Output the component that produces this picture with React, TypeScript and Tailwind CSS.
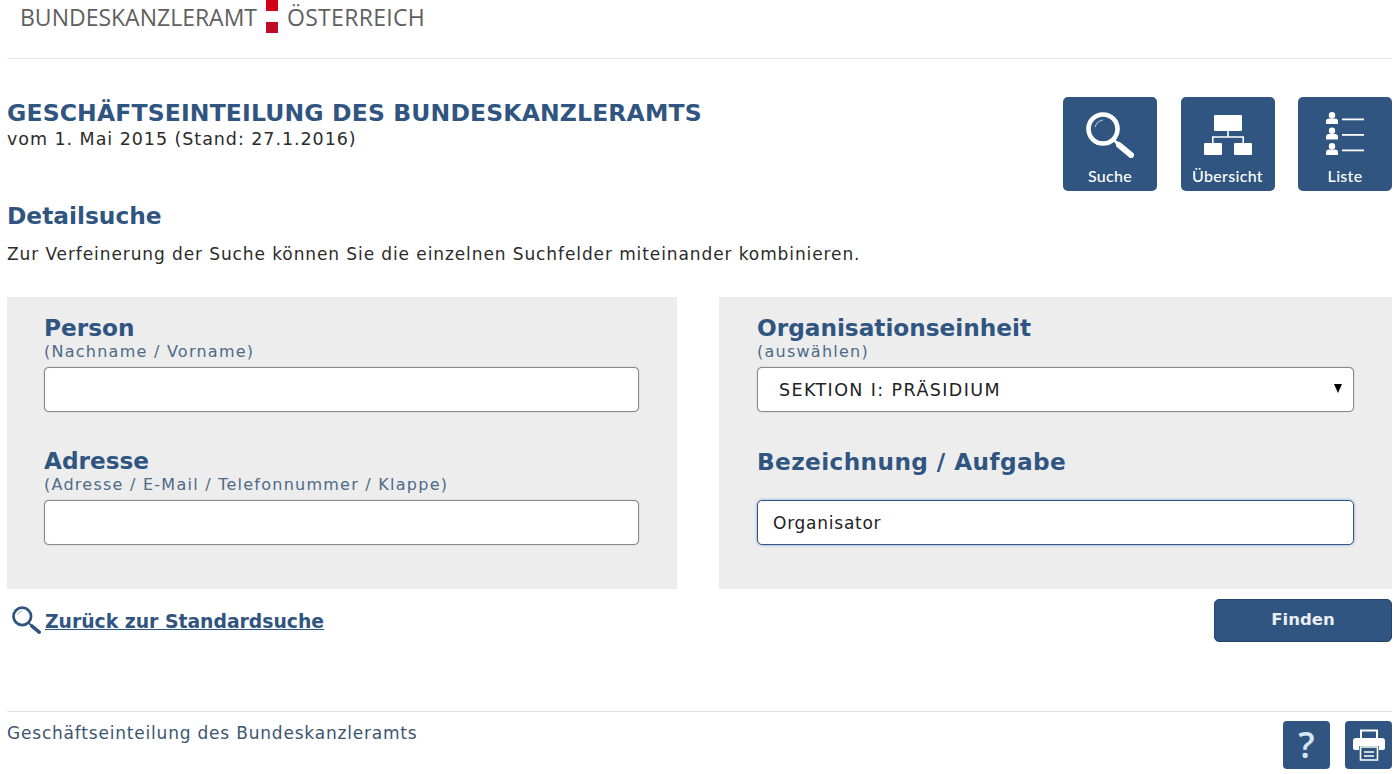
const blue = "text-[#2f5580]";

function SearchIcon({ className }: { className: string }) {
  return (
    <svg viewBox="0 0 48 46" className={className} fill="none" stroke="currentColor">
      <circle cx="17" cy="17" r="14.5" strokeWidth="4.6" />
      <path d="M28 28 L33 33" strokeWidth="3" />
      <path d="M33 33 L45 43" strokeWidth="6" strokeLinecap="round" />
      <path d="M9 15 Q11 9 17 8" strokeWidth="1.2" strokeOpacity="0.6" />
    </svg>
  );
}

function TreeIcon() {
  return (
    <svg viewBox="0 0 48 40" className="h-[40px] w-[48px]" fill="#fff">
      <rect x="10" y="0" width="28" height="16" rx="1" />
      <rect x="0" y="28" width="18" height="12" rx="1" />
      <rect x="30" y="28" width="18" height="12" rx="1" />
      <path d="M23.2 16h1.6v5.2H40v6.8h-1.6v-5.2H9.6V28H8v-6.8h15.2z" />
    </svg>
  );
}

function ListIcon() {
  return (
    <svg viewBox="0 0 38 43" className="h-[43px] w-[38px]" fill="#fff">
      {[0, 15.5, 31].map((y) => (
        <g key={y} transform={`translate(0 ${y})`}>
          <circle cx="6" cy="3.2" r="3.2" />
          <path d="M0 12V9.5Q0 6.5 3 6.5h6q3 0 3 3V12z" />
          <rect x="16" y="6.5" width="22" height="1.8" />
        </g>
      ))}
    </svg>
  );
}

function PrinterIcon() {
  return (
    <svg viewBox="0 0 32 32" className="h-[32px] w-[32px]">
      <path d="M8 1.5h16v10H8z" fill="none" stroke="#fff" strokeWidth="2" />
      <path d="M3 9h26q3 0 3 3v7q0 2-2 2h-4v-4H6v4H2q-2 0-2-2v-7q0-3 3-3z" fill="#fff" />
      <path d="M7.5 18h17v13h-17z" fill="none" stroke="#fff" strokeWidth="1.6" />
      <path d="M11 23h10M11 27h10" stroke="#fff" strokeWidth="1.3" />
    </svg>
  );
}

function NavTile({ label, icon, pad }: { label: string; icon: React.ReactNode; pad: string }) {
  return (
    <div className="flex h-[94px] w-[94px] flex-col items-center rounded-[5px] bg-[#2f5580] text-white">
      <div className={`h-[69px] ${pad}`}>{icon}</div>
      <span className="font-['Lato',sans-serif] text-[16px] font-medium leading-[20px] tracking-[0.3px]">{label}</span>
    </div>
  );
}

function Field({
  title,
  hint,
  children,
  className,
  titleCls,
}: {
  title: string;
  hint?: string;
  children: React.ReactNode;
  className?: string;
  titleCls?: string;
}) {
  return (
    <div className={className}>
      <h3 className={`text-[23.2px] font-bold leading-[26px] ${blue} ${titleCls ?? ""}`}>{title}</h3>
      {hint && <p className="-mb-[2px] mt-[2px] text-[16px] leading-[18px] tracking-[1.25px] text-[#4d6a88]">{hint}</p>}
      {children}
    </div>
  );
}

const inputCls = "block h-[45px] w-full rounded-[5px] bg-white text-[#222] outline-none";
const idleBorder = "mt-[8px] border border-[#8a8a8a] shadow-[0_0_1px_#777]";

export default function App() {
  return (
    <div className="h-[774px] overflow-hidden bg-white pl-[7px] pr-[8px] font-['DejaVu_Sans',sans-serif] text-[#2b2b2b]">
      <header className="flex h-[59px] items-start border-b border-[#e6e6e6] pl-[13px]">
        <span className="mt-[3px] font-['Open_Sans',sans-serif] text-[23px] leading-[28px] text-[#5f5f5f]">BUNDESKANZLERAMT</span>
        <div className="ml-[9px] flex h-[33px] w-[12px] flex-col justify-between">
          <div className="h-[11px] bg-[#d0021b]" />
          <div className="h-[11px] bg-[#c00d25]" />
        </div>
        <span className="ml-[9px] mt-[3px] font-['Open_Sans',sans-serif] text-[23px] leading-[28px] tracking-[0.3px] text-[#5f5f5f]">ÖSTERREICH</span>
      </header>

      <div className="flex justify-between pt-[38px]">
        <div>
          <h1 className={`mt-[3px] text-[23.5px] font-bold leading-[26px] tracking-[0.15px] ${blue}`}>GESCHÄFTSEINTEILUNG DES BUNDESKANZLERAMTS</h1>
          <p className="mt-[3px] text-[17.5px] leading-[20px] tracking-[0.95px]">vom 1. Mai 2015 (Stand: 27.1.2016)</p>
        </div>
        <div className="flex gap-[23.5px]">
          <NavTile label="Suche" pad="pt-[15px]" icon={<SearchIcon className="h-[46px] w-[48px]" />} />
          <NavTile label="Übersicht" pad="pt-[18px]" icon={<TreeIcon />} />
          <NavTile label="Liste" pad="pt-[15px]" icon={<ListIcon />} />
        </div>
      </div>

      <h2 className={`mt-[12px] text-[23.3px] font-bold leading-[26px] ${blue}`}>Detailsuche</h2>
      <p className="mt-[15px] text-[17px] leading-[20px] tracking-[0.9px]">Zur Verfeinerung der Suche können Sie die einzelnen Suchfelder miteinander kombinieren.</p>

      <div className="mt-[33px] flex justify-between">
        <section className="h-[292px] w-[670px] bg-[#ededed] pl-[37px] pr-[38px] pt-[18px]">
          <Field title="Person" hint="(Nachname / Vorname)">
            <input className={`${inputCls} ${idleBorder}`} />
          </Field>
          <Field title="Adresse" hint="(Adresse / E-Mail / Telefonnummer / Klappe)" className="mt-[36px]">
            <input className={`${inputCls} ${idleBorder}`} />
          </Field>
        </section>
        <section className="h-[292px] w-[673px] bg-[#ededed] pl-[38px] pr-[38px] pt-[18px]">
          <Field title="Organisationseinheit" hint="(auswählen)">
            <div className={`${inputCls} ${idleBorder} relative flex items-center pl-[21px] text-[17.5px] tracking-[1.4px]`}>
              <span className="mt-[1px]">SEKTION I: PRÄSIDIUM</span>
              <span className="absolute right-[11px] top-[16px] h-0 w-0 border-x-[4.5px] border-t-[9px] border-x-transparent border-t-black" />
            </div>
          </Field>
          <Field title="Bezeichnung / Aufgabe" titleCls="tracking-[0.4px]" className="mt-[37px]">
            <input
              readOnly
              value="Organisator"
              className={`${inputCls} mt-[25px] border border-[#2f5580] px-[15px] text-[17px] tracking-[0.75px] shadow-[0_0_3px_#7ea3c8]`}
            />
          </Field>
        </section>
      </div>

      <div className="mt-[10px] flex items-start justify-between">
        <a className={`mt-[6px] flex items-center gap-[4px] text-[18.8px] font-bold leading-[26px] ${blue}`}>
          <SearchIcon className="ml-[5px] h-[28px] w-[29px]" />
          <span className="mt-[4px] underline">Zurück zur Standardsuche</span>
        </a>
        <button className="h-[43px] w-[178px] rounded-[5px] border border-[#24466c] bg-[#2f5580] text-[16.5px] font-bold text-[#e8eef4]">Finden</button>
      </div>

      <footer className="mt-[69px] flex justify-between border-t border-[#e0e0e0] pt-[9px]">
        <span className="mt-[1px] text-[17px] leading-[22px] tracking-[0.8px] text-[#3c5570]">Geschäftseinteilung des Bundeskanzleramts</span>
        <div className="flex gap-[15px]">
          <div className="flex h-[48px] w-[47px] items-center justify-center rounded-[4px] bg-[#2f5580] font-['Open_Sans',sans-serif] text-[36px] font-semibold text-[#d5e6f2]">?</div>
          <div className="flex h-[48px] w-[47px] items-center justify-center rounded-[4px] bg-[#2f5580]">
            <PrinterIcon />
          </div>
        </div>
      </footer>
    </div>
  );
}
